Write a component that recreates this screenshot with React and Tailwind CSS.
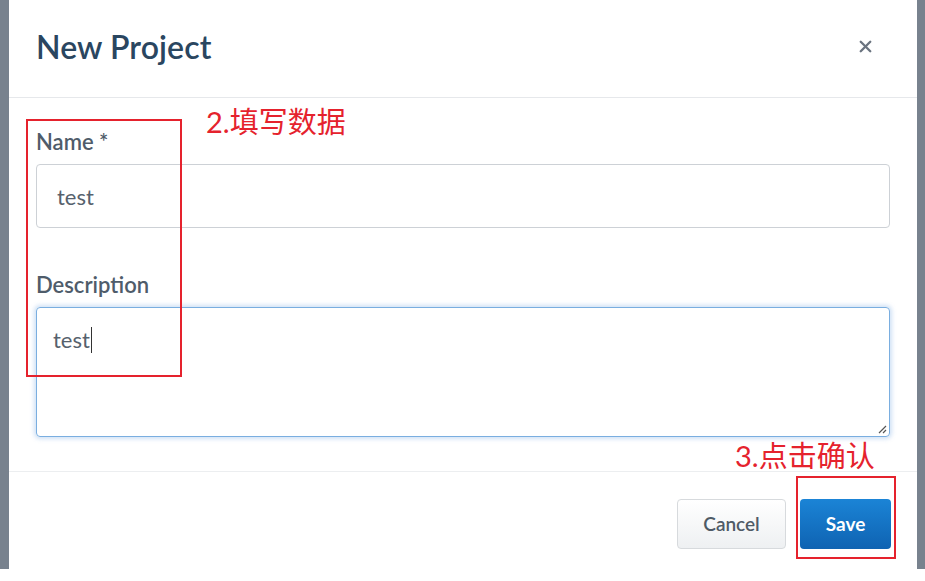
import { X } from 'lucide-react';

const font = { fontFamily: 'Lato, "Noto Sans CJK SC", sans-serif' };

export default function App() {
  return (
    <div className="relative h-[581px] w-[925px] overflow-hidden bg-white" style={font}>
      <div className="flex h-[569px] bg-[#78828e] pl-[9px] pr-[8px]">
        <div className="flex flex-1 flex-col bg-white">
          <header className="flex h-[98px] items-center justify-between border-b border-[#e6e8eb] pb-[4px] pl-[27px] pr-[42px]">
            <h1 className="text-[32px] font-semibold tracking-[0.1px] text-[#2a4660]">New Project</h1>
            <X className="h-[19px] w-[19px] text-[#6b7480]" strokeWidth={3} />
          </header>

          <div className="flex flex-col px-[27px] pt-[31px]">
            <label className="text-[22px] font-semibold leading-[26px] text-[#4f5c6a]">Name *</label>
            <div className="mt-[9px] flex h-[64px] items-center rounded-[4px] border border-[#cdd1d6] pl-[20px] text-[22px] text-[#56616d]">
              test
            </div>

            <label className="mt-[44px] text-[22px] font-semibold leading-[26px] text-[#4f5c6a]">Description</label>
            <div className="relative mt-[9px] h-[130px] rounded-[4px] border border-[#7aaee0] pl-[16px] pt-[14px] text-[22px] text-[#56616d] shadow-[0_0_4px_2px_rgba(120,170,225,0.35)]">
              <span>test</span>
              <span className="ml-[1px] inline-block h-[26px] w-[1px] translate-y-[5px] bg-[#333]" />
              <svg className="absolute bottom-[2px] right-[2px]" width="10" height="10" viewBox="0 0 10 10">
                <path d="M9 2 L2 9 M9 6 L6 9" stroke="#555" strokeWidth="1.2" />
              </svg>
            </div>
          </div>

          <footer className="mt-[34px] flex flex-1 items-start justify-end gap-[14px] border-t border-[#eceef0] pr-[26px] pt-[27px]">
            <button className="h-[50px] w-[109px] rounded-[4px] border border-[#d7dadd] bg-gradient-to-b from-white to-[#eef0f2] text-[19px] font-semibold text-[#4f5a66]">
              Cancel
            </button>
            <button className="h-[50px] w-[91px] rounded-[4px] bg-gradient-to-b from-[#1b84d6] to-[#0f63b2] text-[19px] font-bold text-white">
              Save
            </button>
          </footer>
        </div>
      </div>

      <div className="absolute left-[26px] top-[119px] h-[258px] w-[156px] border-2 border-[#e5222d]" />
      <div className="absolute left-[206px] top-[104px] text-[29px] leading-[36px] text-[#e5222d]">2.填写数据</div>
      <div className="absolute left-[735px] top-[438px] text-[29px] leading-[36px] text-[#e5222d]">3.点击确认</div>
      <div className="absolute left-[796px] top-[476px] h-[83px] w-[100px] border-2 border-[#e5222d]" />
    </div>
  );
}
